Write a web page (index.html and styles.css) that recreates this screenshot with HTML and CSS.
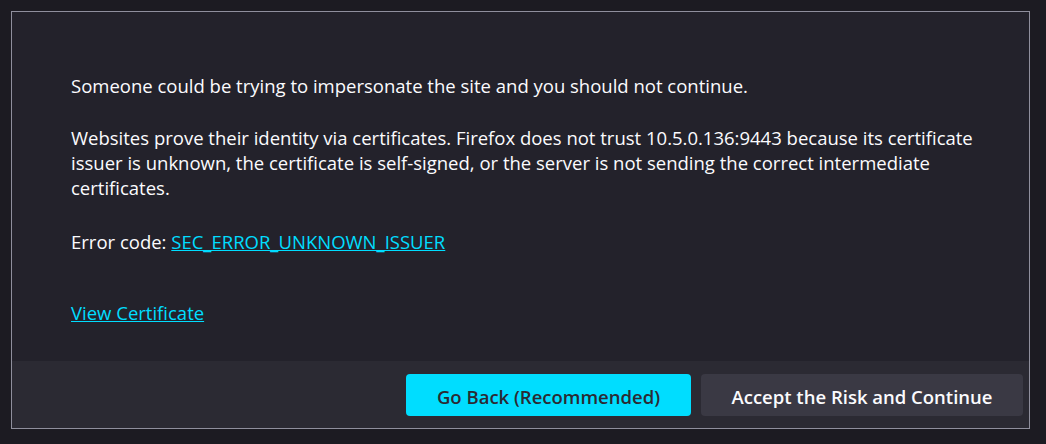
FILE: index.html
```html
<!DOCTYPE html>
<html lang="en">
<head>
<meta charset="utf-8">
<title>Warning: Potential Security Risk Ahead</title>
<link rel="stylesheet" href="styles.css">
</head>
<body>
<div class="panel">
  <div class="content">
    <p class="lead">Someone could be trying to impersonate the site and you should not continue.</p>
    <p class="desc">Websites prove their identity via certificates. Firefox does not trust 10.5.0.136:9443 because its certificate issuer is unknown, the certificate is self-signed, or the server is not sending the correct intermediate certificates.</p>
    <p class="code">Error code: <a href="#" class="link">SEC_ERROR_UNKNOWN_ISSUER</a></p>
    <p class="cert"><a href="#" class="link">View Certificate</a></p>
  </div>
  <div class="actions">
    <button class="btn primary">Go Back (Recommended)</button>
    <button class="btn secondary">Accept the Risk and Continue</button>
  </div>
</div>
</body>
</html>
```

FILE: styles.css
```css
html, body {
  margin: 0;
  padding: 0;
  background: #1c1b22;
}
body {
  padding: 11px;
  font-family: "Open Sans", "Noto Sans", sans-serif;
  color: #fbfbfe;
}
.panel {
  width: 1017px;
  height: 416px;
  border: 1px solid #8f8f9d;
  background: #23222b;
  display: flex;
  flex-direction: column;
}
.content {
  flex: 1;
  padding: 61px 10px 0 59px;
  font-size: 18.5px;
  line-height: 25px;
}
.content p {
  margin: 0;
  max-width: 940px;
}
.lead {
  margin-bottom: 27px !important;
}
.desc {
  margin-bottom: 29px !important;
}
.code {
  margin-bottom: 46px !important;
}
.link {
  color: #00ddff;
  text-decoration: underline;
}
.actions {
  height: 67px;
  background: #2b2a33;
  display: flex;
  justify-content: flex-end;
  align-items: center;
  gap: 10px;
  padding-right: 6px;
}
.btn {
  height: 42px;
  border: none;
  border-radius: 4px;
  font-family: inherit;
  font-size: 18.5px;
  font-weight: 600;
  padding: 3px 0 0 0;
}
.primary {
  width: 285px;
  background: #00ddff;
  color: #2b2a33;
}
.secondary {
  width: 322px;
  background: #3a3944;
  color: #fbfbfe;
}
```
